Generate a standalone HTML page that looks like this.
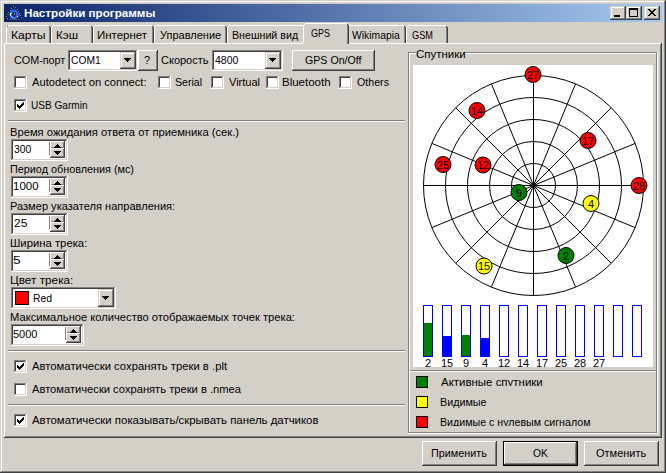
<!DOCTYPE html>
<html><head><meta charset="utf-8">
<style>
*{margin:0;padding:0;box-sizing:border-box}
html,body{width:666px;height:473px;overflow:hidden;background:#D4D0C8}
body{position:relative;font-family:"Liberation Sans",sans-serif;font-size:11px;color:#000}
.a{position:absolute}
.t{position:absolute;white-space:nowrap;line-height:13px;font-size:11px}
.r{position:absolute;background:#D4D0C8;border:1px solid;border-color:#fff #404040 #404040 #fff;box-shadow:inset -1px -1px #808080}
.s{position:absolute;background:#fff;border:1px solid;border-color:#808080 #fff #fff #808080;box-shadow:inset 1px 1px #404040,inset -1px -1px #D4D0C8}
.cb{position:absolute;width:13px;height:13px;background:#fff;border:1px solid;border-color:#808080 #fff #fff #808080;box-shadow:inset 1px 1px #404040,inset -1px -1px #D4D0C8}
.sep{position:absolute;height:2px;border-top:1px solid #808080;border-bottom:1px solid #fff}
</style></head><body>

<svg class="a" style="left:0px;top:0px" width="666" height="473" shape-rendering="crispEdges"><rect x="0" y="0" width="666" height="473" fill="#D4D0C8"/><rect x="0" y="0" width="665" height="1" fill="#D4D0C8"/><rect x="0" y="0" width="1" height="472" fill="#D4D0C8"/><rect x="0" y="472" width="666" height="1" fill="#404040"/><rect x="665" y="0" width="1" height="473" fill="#404040"/><rect x="1" y="1" width="663" height="1" fill="#fff"/><rect x="1" y="1" width="1" height="470" fill="#fff"/><rect x="1" y="471" width="664" height="1" fill="#808080"/><rect x="664" y="1" width="1" height="471" fill="#808080"/></svg>
<div class="a" style="left:4px;top:4px;width:658px;height:18px;background:linear-gradient(to right,#0A246A,#A6CAF0)"></div>
<svg class="a" style="left:0;top:0" width="30" height="22" shape-rendering="crispEdges"><rect x="11" y="9" width="1" height="1" fill="#1438b0"/><rect x="12" y="9" width="1" height="1" fill="#1438b0"/><rect x="13" y="9" width="1" height="1" fill="#1438b0"/><rect x="14" y="9" width="1" height="1" fill="#1438b0"/><rect x="15" y="9" width="1" height="1" fill="#1438b0"/><rect x="16" y="9" width="1" height="1" fill="#1438b0"/><rect x="10" y="10" width="1" height="1" fill="#1438b0"/><rect x="11" y="10" width="1" height="1" fill="#1438b0"/><rect x="12" y="10" width="1" height="1" fill="#2a6ae8"/><rect x="13" y="10" width="1" height="1" fill="#2a6ae8"/><rect x="14" y="10" width="1" height="1" fill="#2a6ae8"/><rect x="15" y="10" width="1" height="1" fill="#2a6ae8"/><rect x="16" y="10" width="1" height="1" fill="#1438b0"/><rect x="17" y="10" width="1" height="1" fill="#1438b0"/><rect x="9" y="11" width="1" height="1" fill="#1438b0"/><rect x="10" y="11" width="1" height="1" fill="#1438b0"/><rect x="11" y="11" width="1" height="1" fill="#2a6ae8"/><rect x="12" y="11" width="1" height="1" fill="#2a6ae8"/><rect x="13" y="11" width="1" height="1" fill="#2a6ae8"/><rect x="14" y="11" width="1" height="1" fill="#2a6ae8"/><rect x="15" y="11" width="1" height="1" fill="#2a6ae8"/><rect x="16" y="11" width="1" height="1" fill="#2a6ae8"/><rect x="17" y="11" width="1" height="1" fill="#1438b0"/><rect x="18" y="11" width="1" height="1" fill="#1438b0"/><rect x="9" y="12" width="1" height="1" fill="#1438b0"/><rect x="10" y="12" width="1" height="1" fill="#2a6ae8"/><rect x="11" y="12" width="1" height="1" fill="#2a6ae8"/><rect x="12" y="12" width="1" height="1" fill="#2a6ae8"/><rect x="13" y="12" width="1" height="1" fill="#10287a"/><rect x="14" y="12" width="1" height="1" fill="#10287a"/><rect x="15" y="12" width="1" height="1" fill="#2a6ae8"/><rect x="16" y="12" width="1" height="1" fill="#2a6ae8"/><rect x="17" y="12" width="1" height="1" fill="#2a6ae8"/><rect x="18" y="12" width="1" height="1" fill="#1438b0"/><rect x="8" y="13" width="1" height="1" fill="#1438b0"/><rect x="9" y="13" width="1" height="1" fill="#1438b0"/><rect x="10" y="13" width="1" height="1" fill="#2a6ae8"/><rect x="11" y="13" width="1" height="1" fill="#2a6ae8"/><rect x="12" y="13" width="1" height="1" fill="#10287a"/><rect x="13" y="13" width="1" height="1" fill="#10287a"/><rect x="14" y="13" width="1" height="1" fill="#10287a"/><rect x="15" y="13" width="1" height="1" fill="#10287a"/><rect x="16" y="13" width="1" height="1" fill="#2a6ae8"/><rect x="17" y="13" width="1" height="1" fill="#2a6ae8"/><rect x="18" y="13" width="1" height="1" fill="#1438b0"/><rect x="19" y="13" width="1" height="1" fill="#1438b0"/><rect x="8" y="14" width="1" height="1" fill="#1438b0"/><rect x="9" y="14" width="1" height="1" fill="#2a6ae8"/><rect x="10" y="14" width="1" height="1" fill="#2a6ae8"/><rect x="11" y="14" width="1" height="1" fill="#2a6ae8"/><rect x="12" y="14" width="1" height="1" fill="#10287a"/><rect x="13" y="14" width="1" height="1" fill="#10287a"/><rect x="14" y="14" width="1" height="1" fill="#10287a"/><rect x="15" y="14" width="1" height="1" fill="#10287a"/><rect x="16" y="14" width="1" height="1" fill="#2a6ae8"/><rect x="17" y="14" width="1" height="1" fill="#2a6ae8"/><rect x="18" y="14" width="1" height="1" fill="#2a6ae8"/><rect x="19" y="14" width="1" height="1" fill="#1438b0"/><rect x="8" y="15" width="1" height="1" fill="#1438b0"/><rect x="9" y="15" width="1" height="1" fill="#1438b0"/><rect x="10" y="15" width="1" height="1" fill="#2a6ae8"/><rect x="11" y="15" width="1" height="1" fill="#2a6ae8"/><rect x="12" y="15" width="1" height="1" fill="#10287a"/><rect x="13" y="15" width="1" height="1" fill="#10287a"/><rect x="14" y="15" width="1" height="1" fill="#10287a"/><rect x="15" y="15" width="1" height="1" fill="#10287a"/><rect x="16" y="15" width="1" height="1" fill="#2a6ae8"/><rect x="17" y="15" width="1" height="1" fill="#2a6ae8"/><rect x="18" y="15" width="1" height="1" fill="#1438b0"/><rect x="19" y="15" width="1" height="1" fill="#1438b0"/><rect x="9" y="16" width="1" height="1" fill="#1438b0"/><rect x="10" y="16" width="1" height="1" fill="#2a6ae8"/><rect x="11" y="16" width="1" height="1" fill="#2a6ae8"/><rect x="12" y="16" width="1" height="1" fill="#2a6ae8"/><rect x="13" y="16" width="1" height="1" fill="#10287a"/><rect x="14" y="16" width="1" height="1" fill="#10287a"/><rect x="15" y="16" width="1" height="1" fill="#2a6ae8"/><rect x="16" y="16" width="1" height="1" fill="#2a6ae8"/><rect x="17" y="16" width="1" height="1" fill="#2a6ae8"/><rect x="18" y="16" width="1" height="1" fill="#1438b0"/><rect x="9" y="17" width="1" height="1" fill="#1438b0"/><rect x="10" y="17" width="1" height="1" fill="#1438b0"/><rect x="11" y="17" width="1" height="1" fill="#2a6ae8"/><rect x="12" y="17" width="1" height="1" fill="#2a6ae8"/><rect x="13" y="17" width="1" height="1" fill="#2a6ae8"/><rect x="14" y="17" width="1" height="1" fill="#2a6ae8"/><rect x="15" y="17" width="1" height="1" fill="#2a6ae8"/><rect x="16" y="17" width="1" height="1" fill="#2a6ae8"/><rect x="17" y="17" width="1" height="1" fill="#1438b0"/><rect x="18" y="17" width="1" height="1" fill="#1438b0"/><rect x="10" y="18" width="1" height="1" fill="#1438b0"/><rect x="11" y="18" width="1" height="1" fill="#1438b0"/><rect x="12" y="18" width="1" height="1" fill="#2a6ae8"/><rect x="13" y="18" width="1" height="1" fill="#2a6ae8"/><rect x="14" y="18" width="1" height="1" fill="#2a6ae8"/><rect x="15" y="18" width="1" height="1" fill="#2a6ae8"/><rect x="16" y="18" width="1" height="1" fill="#1438b0"/><rect x="17" y="18" width="1" height="1" fill="#1438b0"/><rect x="11" y="19" width="1" height="1" fill="#1438b0"/><rect x="12" y="19" width="1" height="1" fill="#1438b0"/><rect x="13" y="19" width="1" height="1" fill="#1438b0"/><rect x="14" y="19" width="1" height="1" fill="#1438b0"/><rect x="15" y="19" width="1" height="1" fill="#1438b0"/><rect x="16" y="19" width="1" height="1" fill="#1438b0"/><rect x="10" y="13" width="1" height="1" fill="#d8ecff"/><rect x="10" y="14" width="1" height="1" fill="#ffffff"/><rect x="11" y="13" width="1" height="1" fill="#a0d0ff"/><rect x="10" y="15" width="1" height="1" fill="#c0e0ff"/><rect x="11" y="16" width="1" height="1" fill="#a0c8ff"/><rect x="17" y="16" width="1" height="1" fill="#f0f8ff"/><rect x="14" y="13" width="1" height="1" fill="#c8a850"/><rect x="14" y="14" width="1" height="1" fill="#a08030"/><rect x="13" y="12" width="1" height="1" fill="#203060"/><rect x="15" y="12" width="1" height="1" fill="#203060"/><rect x="14" y="16" width="1" height="1" fill="#0a2a90"/><rect x="13" y="15" width="1" height="1" fill="#1a3aa0"/><rect x="15" y="15" width="1" height="1" fill="#1a3aa0"/><rect x="12" y="17" width="1" height="1" fill="#c8d8ff"/><rect x="13" y="6" width="1" height="1" fill="#8a8878"/><rect x="12" y="7" width="1" height="1" fill="#141414"/><rect x="11" y="8" width="1" height="1" fill="#8a8878"/><rect x="10" y="9" width="1" height="1" fill="#141414"/><rect x="10" y="10" width="1" height="1" fill="#8a8878"/><rect x="9" y="11" width="1" height="1" fill="#141414"/><rect x="8" y="12" width="1" height="1" fill="#8a8878"/><rect x="8" y="13" width="1" height="1" fill="#141414"/><rect x="7" y="14" width="1" height="1" fill="#8a8878"/><rect x="7" y="15" width="1" height="1" fill="#141414"/><rect x="6" y="16" width="1" height="1" fill="#8a8878"/><rect x="6" y="17" width="1" height="1" fill="#141414"/><rect x="7" y="18" width="1" height="1" fill="#8a8878"/><rect x="14" y="6" width="1" height="1" fill="#141414"/><rect x="15" y="7" width="1" height="1" fill="#8a8878"/><rect x="16" y="8" width="1" height="1" fill="#141414"/><rect x="17" y="9" width="1" height="1" fill="#8a8878"/><rect x="17" y="10" width="1" height="1" fill="#141414"/><rect x="18" y="11" width="1" height="1" fill="#8a8878"/><rect x="19" y="12" width="1" height="1" fill="#141414"/><rect x="19" y="13" width="1" height="1" fill="#8a8878"/><rect x="20" y="14" width="1" height="1" fill="#141414"/><rect x="20" y="15" width="1" height="1" fill="#8a8878"/><rect x="21" y="16" width="1" height="1" fill="#141414"/><rect x="21" y="17" width="1" height="1" fill="#8a8878"/><rect x="20" y="18" width="1" height="1" fill="#141414"/><rect x="9" y="19" width="1" height="1" fill="#404040"/><rect x="10" y="19" width="1" height="1" fill="#606060"/><rect x="11" y="19" width="1" height="1" fill="#404040"/><rect x="12" y="19" width="1" height="1" fill="#606060"/><rect x="13" y="19" width="1" height="1" fill="#404040"/><rect x="14" y="19" width="1" height="1" fill="#606060"/><rect x="15" y="19" width="1" height="1" fill="#404040"/><rect x="16" y="19" width="1" height="1" fill="#606060"/><rect x="17" y="19" width="1" height="1" fill="#404040"/><rect x="18" y="19" width="1" height="1" fill="#606060"/><rect x="19" y="19" width="1" height="1" fill="#404040"/></svg>
<div class="t" style="left:23.94px;top:7px;transform:scaleX(1.0574);transform-origin:0 0;font-weight:bold;color:#fff">Настройки программы</div>
<svg class="a" style="left:610px;top:6px" width="16" height="14" shape-rendering="crispEdges"><rect x="0" y="0" width="16" height="14" fill="#D4D0C8"/><rect x="0" y="0" width="15" height="1" fill="#D4D0C8"/><rect x="0" y="0" width="1" height="13" fill="#D4D0C8"/><rect x="0" y="13" width="16" height="1" fill="#404040"/><rect x="15" y="0" width="1" height="14" fill="#404040"/><rect x="1" y="1" width="13" height="1" fill="#fff"/><rect x="1" y="1" width="1" height="11" fill="#fff"/><rect x="1" y="12" width="14" height="1" fill="#808080"/><rect x="14" y="1" width="1" height="12" fill="#808080"/></svg>
<svg class="a" style="left:626px;top:6px" width="16" height="14" shape-rendering="crispEdges"><rect x="0" y="0" width="16" height="14" fill="#D4D0C8"/><rect x="0" y="0" width="15" height="1" fill="#D4D0C8"/><rect x="0" y="0" width="1" height="13" fill="#D4D0C8"/><rect x="0" y="13" width="16" height="1" fill="#404040"/><rect x="15" y="0" width="1" height="14" fill="#404040"/><rect x="1" y="1" width="13" height="1" fill="#fff"/><rect x="1" y="1" width="1" height="11" fill="#fff"/><rect x="1" y="12" width="14" height="1" fill="#808080"/><rect x="14" y="1" width="1" height="12" fill="#808080"/></svg>
<svg class="a" style="left:644px;top:6px" width="16" height="14" shape-rendering="crispEdges"><rect x="0" y="0" width="16" height="14" fill="#D4D0C8"/><rect x="0" y="0" width="15" height="1" fill="#D4D0C8"/><rect x="0" y="0" width="1" height="13" fill="#D4D0C8"/><rect x="0" y="13" width="16" height="1" fill="#404040"/><rect x="15" y="0" width="1" height="14" fill="#404040"/><rect x="1" y="1" width="13" height="1" fill="#fff"/><rect x="1" y="1" width="1" height="11" fill="#fff"/><rect x="1" y="12" width="14" height="1" fill="#808080"/><rect x="14" y="1" width="1" height="12" fill="#808080"/></svg>
<div class="a" style="left:614px;top:15px;width:6px;height:2px;background:#000"></div>
<div class="a" style="left:629px;top:8px;width:9px;height:9px;border:1px solid #000;border-top-width:2px"></div>
<svg class="a" style="left:648px;top:9px" width="8" height="7" shape-rendering="crispEdges"><path fill="#000" d="M0 0h2v1h-2zM6 0h2v1h-2zM1 1h2v1h-2zM5 1h2v1h-2zM2 2h4v1h-4zM3 3h2v1h-2zM2 4h4v1h-4zM1 5h2v1h-2zM5 5h2v1h-2zM0 6h2v1h-2zM6 6h2v1h-2z"/></svg>
<svg class="a" style="left:4px;top:43px" width="658" height="395" shape-rendering="crispEdges"><rect x="0" y="0" width="657" height="1" fill="#fff"/><rect x="0" y="0" width="1" height="394" fill="#fff"/><rect x="0" y="394" width="658" height="1" fill="#404040"/><rect x="657" y="0" width="1" height="395" fill="#404040"/><rect x="1" y="393" width="656" height="1" fill="#808080"/><rect x="656" y="1" width="1" height="393" fill="#808080"/></svg>
<svg class="a" style="left:0;top:0" width="666" height="50" shape-rendering="crispEdges">
<rect x="6" y="27" width="1" height="16" fill="#fff"/>
<rect x="7" y="26" width="1" height="1" fill="#808080"/>
<rect x="8" y="25" width="41" height="1" fill="#fff"/>
<rect x="49" y="26" width="1" height="1" fill="#404040"/>
<rect x="49" y="27" width="1" height="16" fill="#808080"/>
<rect x="50" y="27" width="1" height="16" fill="#404040"/>
<rect x="51" y="27" width="1" height="16" fill="#fff"/>
<rect x="52" y="26" width="1" height="1" fill="#fff"/>
<rect x="53" y="25" width="38" height="1" fill="#fff"/>
<rect x="91" y="26" width="1" height="1" fill="#404040"/>
<rect x="91" y="27" width="1" height="16" fill="#808080"/>
<rect x="92" y="27" width="1" height="16" fill="#404040"/>
<rect x="93" y="27" width="1" height="16" fill="#fff"/>
<rect x="94" y="26" width="1" height="1" fill="#fff"/>
<rect x="95" y="25" width="57" height="1" fill="#fff"/>
<rect x="152" y="26" width="1" height="1" fill="#404040"/>
<rect x="152" y="27" width="1" height="16" fill="#808080"/>
<rect x="153" y="27" width="1" height="16" fill="#404040"/>
<rect x="154" y="27" width="1" height="16" fill="#fff"/>
<rect x="155" y="26" width="1" height="1" fill="#fff"/>
<rect x="156" y="25" width="69" height="1" fill="#fff"/>
<rect x="225" y="26" width="1" height="1" fill="#404040"/>
<rect x="225" y="27" width="1" height="16" fill="#808080"/>
<rect x="226" y="27" width="1" height="16" fill="#404040"/>
<rect x="227" y="27" width="1" height="16" fill="#fff"/>
<rect x="228" y="26" width="1" height="1" fill="#fff"/>
<rect x="229" y="25" width="74" height="1" fill="#fff"/>
<rect x="303" y="26" width="1" height="1" fill="#404040"/>
<rect x="303" y="27" width="1" height="16" fill="#808080"/>
<rect x="304" y="27" width="1" height="16" fill="#404040"/>
<rect x="347" y="27" width="1" height="16" fill="#fff"/>
<rect x="348" y="26" width="1" height="1" fill="#fff"/>
<rect x="349" y="25" width="55" height="1" fill="#fff"/>
<rect x="404" y="26" width="1" height="1" fill="#404040"/>
<rect x="404" y="27" width="1" height="16" fill="#808080"/>
<rect x="405" y="27" width="1" height="16" fill="#404040"/>
<rect x="406" y="27" width="1" height="16" fill="#fff"/>
<rect x="407" y="26" width="1" height="1" fill="#fff"/>
<rect x="408" y="25" width="38" height="1" fill="#fff"/>
<rect x="446" y="26" width="1" height="1" fill="#404040"/>
<rect x="446" y="27" width="1" height="16" fill="#808080"/>
<rect x="447" y="27" width="1" height="16" fill="#404040"/>
<rect x="303" y="24" width="46" height="20" fill="#D4D0C8"/>
<rect x="303" y="25" width="1" height="18" fill="#fff"/>
<rect x="304" y="24" width="1" height="1" fill="#fff"/>
<rect x="305" y="23" width="42" height="1" fill="#fff"/>
<rect x="347" y="24" width="1" height="1" fill="#404040"/>
<rect x="347" y="25" width="1" height="19" fill="#808080"/>
<rect x="348" y="25" width="1" height="19" fill="#404040"/>
</svg>
<div class="t" style="left:10.90px;top:29px;transform:scaleX(1.1034);transform-origin:0 0;">Карты</div>
<div class="t" style="left:55.94px;top:29px;transform:scaleX(1.0556);transform-origin:0 0;">Кэш</div>
<div class="t" style="left:96.96px;top:29px;transform:scaleX(1.0435);transform-origin:0 0;">Интернет</div>
<div class="t" style="left:160.00px;top:29px;transform:scaleX(1.0000);transform-origin:0 0;">Управление</div>
<div class="t" style="left:232.03px;top:29px;transform:scaleX(0.9697);transform-origin:0 0;">Внешний вид</div>
<div class="t" style="left:311.00px;top:27px;transform:scaleX(0.8182);transform-origin:0 0;">GPS</div>
<div class="t" style="left:352.00px;top:29px;transform:scaleX(0.9400);transform-origin:0 0;">Wikimapia</div>
<div class="t" style="left:412.00px;top:29px;transform:scaleX(0.8333);transform-origin:0 0;">GSM</div>
<div class="t" style="left:14.00px;top:54px;transform:scaleX(0.9804);transform-origin:0 0;">COM-порт</div>
<svg class="a" style="left:68px;top:50px" width="70" height="21" shape-rendering="crispEdges"><rect x="0" y="0" width="70" height="21" fill="#fff"/><rect x="0" y="0" width="69" height="1" fill="#808080"/><rect x="0" y="0" width="1" height="20" fill="#808080"/><rect x="0" y="20" width="70" height="1" fill="#fff"/><rect x="69" y="0" width="1" height="21" fill="#fff"/><rect x="1" y="1" width="67" height="1" fill="#404040"/><rect x="1" y="1" width="1" height="18" fill="#404040"/><rect x="1" y="19" width="68" height="1" fill="#D4D0C8"/><rect x="68" y="1" width="1" height="19" fill="#D4D0C8"/></svg>
<svg class="a" style="left:120px;top:52px" width="16" height="17" shape-rendering="crispEdges"><rect x="0" y="0" width="16" height="17" fill="#D4D0C8"/><rect x="0" y="0" width="15" height="1" fill="#D4D0C8"/><rect x="0" y="0" width="1" height="16" fill="#D4D0C8"/><rect x="0" y="16" width="16" height="1" fill="#404040"/><rect x="15" y="0" width="1" height="17" fill="#404040"/><rect x="1" y="1" width="13" height="1" fill="#fff"/><rect x="1" y="1" width="1" height="14" fill="#fff"/><rect x="1" y="15" width="14" height="1" fill="#808080"/><rect x="14" y="1" width="1" height="15" fill="#808080"/></svg>
<svg class="a" style="left:124px;top:58px" width="7" height="4" shape-rendering="crispEdges"><path fill="#000" d="M0 0h7v1h-7zM1 1h5v1h-5zM2 2h3v1h-3zM3 3h1v1h-1z"/></svg>
<div class="t" style="left:71.00px;top:54px;transform:scaleX(0.9333);transform-origin:0 0;">COM1</div>
<svg class="a" style="left:138px;top:50px" width="20" height="21" shape-rendering="crispEdges"><rect x="0" y="0" width="20" height="21" fill="#D4D0C8"/><rect x="0" y="0" width="19" height="1" fill="#fff"/><rect x="0" y="0" width="1" height="20" fill="#fff"/><rect x="0" y="20" width="20" height="1" fill="#404040"/><rect x="19" y="0" width="1" height="21" fill="#404040"/><rect x="1" y="1" width="17" height="1" fill="#D4D0C8"/><rect x="1" y="1" width="1" height="18" fill="#D4D0C8"/><rect x="1" y="19" width="18" height="1" fill="#808080"/><rect x="18" y="1" width="1" height="19" fill="#808080"/></svg>
<div class="t" style="left:144.00px;top:54px;transform:scaleX(1.0000);transform-origin:0 0;">?</div>
<div class="t" style="left:161.00px;top:54px;transform:scaleX(1.0000);transform-origin:0 0;">Скорость</div>
<svg class="a" style="left:212px;top:50px" width="71" height="21" shape-rendering="crispEdges"><rect x="0" y="0" width="71" height="21" fill="#fff"/><rect x="0" y="0" width="70" height="1" fill="#808080"/><rect x="0" y="0" width="1" height="20" fill="#808080"/><rect x="0" y="20" width="71" height="1" fill="#fff"/><rect x="70" y="0" width="1" height="21" fill="#fff"/><rect x="1" y="1" width="68" height="1" fill="#404040"/><rect x="1" y="1" width="1" height="18" fill="#404040"/><rect x="1" y="19" width="69" height="1" fill="#D4D0C8"/><rect x="69" y="1" width="1" height="19" fill="#D4D0C8"/></svg>
<svg class="a" style="left:265px;top:52px" width="16" height="17" shape-rendering="crispEdges"><rect x="0" y="0" width="16" height="17" fill="#D4D0C8"/><rect x="0" y="0" width="15" height="1" fill="#D4D0C8"/><rect x="0" y="0" width="1" height="16" fill="#D4D0C8"/><rect x="0" y="16" width="16" height="1" fill="#404040"/><rect x="15" y="0" width="1" height="17" fill="#404040"/><rect x="1" y="1" width="13" height="1" fill="#fff"/><rect x="1" y="1" width="1" height="14" fill="#fff"/><rect x="1" y="15" width="14" height="1" fill="#808080"/><rect x="14" y="1" width="1" height="15" fill="#808080"/></svg>
<svg class="a" style="left:269px;top:58px" width="7" height="4" shape-rendering="crispEdges"><path fill="#000" d="M0 0h7v1h-7zM1 1h5v1h-5zM2 2h3v1h-3zM3 3h1v1h-1z"/></svg>
<div class="t" style="left:215.00px;top:54px;transform:scaleX(0.9565);transform-origin:0 0;">4800</div>
<svg class="a" style="left:292px;top:50px" width="83" height="21" shape-rendering="crispEdges"><rect x="0" y="0" width="83" height="21" fill="#D4D0C8"/><rect x="0" y="0" width="82" height="1" fill="#fff"/><rect x="0" y="0" width="1" height="20" fill="#fff"/><rect x="0" y="20" width="83" height="1" fill="#404040"/><rect x="82" y="0" width="1" height="21" fill="#404040"/><rect x="1" y="1" width="80" height="1" fill="#D4D0C8"/><rect x="1" y="1" width="1" height="18" fill="#D4D0C8"/><rect x="1" y="19" width="81" height="1" fill="#808080"/><rect x="81" y="1" width="1" height="19" fill="#808080"/></svg>
<div class="t" style="left:305.00px;top:54px;transform:scaleX(0.9655);transform-origin:0 0;">GPS On/Off</div>
<svg class="a" style="left:14px;top:76px" width="13" height="13" shape-rendering="crispEdges"><rect x="0" y="0" width="13" height="13" fill="#fff"/><rect x="0" y="0" width="12" height="1" fill="#808080"/><rect x="0" y="0" width="1" height="12" fill="#808080"/><rect x="0" y="12" width="13" height="1" fill="#fff"/><rect x="12" y="0" width="1" height="13" fill="#fff"/><rect x="1" y="1" width="10" height="1" fill="#404040"/><rect x="1" y="1" width="1" height="10" fill="#404040"/><rect x="1" y="11" width="11" height="1" fill="#D4D0C8"/><rect x="11" y="1" width="1" height="11" fill="#D4D0C8"/></svg>
<div class="t" style="left:32.00px;top:76px;transform:scaleX(1.0180);transform-origin:0 0;">Autodetect on connect:</div>
<svg class="a" style="left:158px;top:76px" width="13" height="13" shape-rendering="crispEdges"><rect x="0" y="0" width="13" height="13" fill="#fff"/><rect x="0" y="0" width="12" height="1" fill="#808080"/><rect x="0" y="0" width="1" height="12" fill="#808080"/><rect x="0" y="12" width="13" height="1" fill="#fff"/><rect x="12" y="0" width="1" height="13" fill="#fff"/><rect x="1" y="1" width="10" height="1" fill="#404040"/><rect x="1" y="1" width="1" height="10" fill="#404040"/><rect x="1" y="11" width="11" height="1" fill="#D4D0C8"/><rect x="11" y="1" width="1" height="11" fill="#D4D0C8"/></svg>
<div class="t" style="left:175.04px;top:76px;transform:scaleX(0.9615);transform-origin:0 0;">Serial</div>
<svg class="a" style="left:211px;top:76px" width="13" height="13" shape-rendering="crispEdges"><rect x="0" y="0" width="13" height="13" fill="#fff"/><rect x="0" y="0" width="12" height="1" fill="#808080"/><rect x="0" y="0" width="1" height="12" fill="#808080"/><rect x="0" y="12" width="13" height="1" fill="#fff"/><rect x="12" y="0" width="1" height="13" fill="#fff"/><rect x="1" y="1" width="10" height="1" fill="#404040"/><rect x="1" y="1" width="1" height="10" fill="#404040"/><rect x="1" y="11" width="11" height="1" fill="#D4D0C8"/><rect x="11" y="1" width="1" height="11" fill="#D4D0C8"/></svg>
<div class="t" style="left:229.00px;top:76px;transform:scaleX(1.0000);transform-origin:0 0;">Virtual</div>
<svg class="a" style="left:266px;top:76px" width="13" height="13" shape-rendering="crispEdges"><rect x="0" y="0" width="13" height="13" fill="#fff"/><rect x="0" y="0" width="12" height="1" fill="#808080"/><rect x="0" y="0" width="1" height="12" fill="#808080"/><rect x="0" y="12" width="13" height="1" fill="#fff"/><rect x="12" y="0" width="1" height="13" fill="#fff"/><rect x="1" y="1" width="10" height="1" fill="#404040"/><rect x="1" y="1" width="1" height="10" fill="#404040"/><rect x="1" y="11" width="11" height="1" fill="#D4D0C8"/><rect x="11" y="1" width="1" height="11" fill="#D4D0C8"/></svg>
<div class="t" style="left:281.95px;top:76px;transform:scaleX(1.0455);transform-origin:0 0;">Bluetooth</div>
<svg class="a" style="left:339px;top:76px" width="13" height="13" shape-rendering="crispEdges"><rect x="0" y="0" width="13" height="13" fill="#fff"/><rect x="0" y="0" width="12" height="1" fill="#808080"/><rect x="0" y="0" width="1" height="12" fill="#808080"/><rect x="0" y="12" width="13" height="1" fill="#fff"/><rect x="12" y="0" width="1" height="13" fill="#fff"/><rect x="1" y="1" width="10" height="1" fill="#404040"/><rect x="1" y="1" width="1" height="10" fill="#404040"/><rect x="1" y="11" width="11" height="1" fill="#D4D0C8"/><rect x="11" y="1" width="1" height="11" fill="#D4D0C8"/></svg>
<div class="t" style="left:357.00px;top:76px;transform:scaleX(0.9688);transform-origin:0 0;">Others</div>
<svg class="a" style="left:14px;top:99px" width="13" height="13" shape-rendering="crispEdges"><rect x="0" y="0" width="13" height="13" fill="#fff"/><rect x="0" y="0" width="12" height="1" fill="#808080"/><rect x="0" y="0" width="1" height="12" fill="#808080"/><rect x="0" y="12" width="13" height="1" fill="#fff"/><rect x="12" y="0" width="1" height="13" fill="#fff"/><rect x="1" y="1" width="10" height="1" fill="#404040"/><rect x="1" y="1" width="1" height="10" fill="#404040"/><rect x="1" y="11" width="11" height="1" fill="#D4D0C8"/><rect x="11" y="1" width="1" height="11" fill="#D4D0C8"/></svg>
<svg class="a" style="left:17px;top:102px" width="7" height="7" shape-rendering="crispEdges"><path fill="#000" d="M0 2h1v1h-1zM0 3h1v1h-1zM0 4h1v1h-1zM1 3h1v1h-1zM1 4h1v1h-1zM1 5h1v1h-1zM2 4h1v1h-1zM2 5h1v1h-1zM2 6h1v1h-1zM3 3h1v1h-1zM3 4h1v1h-1zM3 5h1v1h-1zM4 2h1v1h-1zM4 3h1v1h-1zM4 4h1v1h-1zM5 1h1v1h-1zM5 2h1v1h-1zM5 3h1v1h-1zM6 0h1v1h-1zM6 1h1v1h-1zM6 2h1v1h-1z"/></svg>
<div class="t" style="left:31.08px;top:99px;transform:scaleX(0.9153);transform-origin:0 0;">USB Garmin</div>
<div class="sep" style="left:8px;top:120px;width:397px"></div>
<div class="t" style="left:9.98px;top:126px;transform:scaleX(1.0180);transform-origin:0 0;">Время ожидания ответа от приемника (сек.)</div>
<svg class="a" style="left:11px;top:139px" width="57" height="22" shape-rendering="crispEdges"><rect x="0" y="0" width="57" height="22" fill="#fff"/><rect x="0" y="0" width="56" height="1" fill="#808080"/><rect x="0" y="0" width="1" height="21" fill="#808080"/><rect x="0" y="21" width="57" height="1" fill="#fff"/><rect x="56" y="0" width="1" height="22" fill="#fff"/><rect x="1" y="1" width="54" height="1" fill="#404040"/><rect x="1" y="1" width="1" height="19" fill="#404040"/><rect x="1" y="20" width="55" height="1" fill="#D4D0C8"/><rect x="55" y="1" width="1" height="20" fill="#D4D0C8"/></svg>
<div class="a" style="left:49px;top:142px;width:1px;height:13px;background:#808080"></div>
<svg class="a" style="left:50px;top:141px" width="15" height="8" shape-rendering="crispEdges"><rect x="0" y="0" width="15" height="8" fill="#D4D0C8"/><rect x="0" y="0" width="14" height="1" fill="#fff"/><rect x="0" y="0" width="1" height="7" fill="#fff"/><rect x="0" y="7" width="15" height="1" fill="#404040"/><rect x="14" y="0" width="1" height="8" fill="#404040"/><rect x="1" y="1" width="12" height="1" fill="#D4D0C8"/><rect x="1" y="1" width="1" height="5" fill="#D4D0C8"/><rect x="1" y="6" width="13" height="1" fill="#808080"/><rect x="13" y="1" width="1" height="6" fill="#808080"/></svg>
<svg class="a" style="left:50px;top:148px" width="15" height="10" shape-rendering="crispEdges"><rect x="0" y="0" width="15" height="10" fill="#D4D0C8"/><rect x="0" y="0" width="14" height="1" fill="#fff"/><rect x="0" y="0" width="1" height="9" fill="#fff"/><rect x="0" y="9" width="15" height="1" fill="#404040"/><rect x="14" y="0" width="1" height="10" fill="#404040"/><rect x="1" y="1" width="12" height="1" fill="#D4D0C8"/><rect x="1" y="1" width="1" height="7" fill="#D4D0C8"/><rect x="1" y="8" width="13" height="1" fill="#808080"/><rect x="13" y="1" width="1" height="8" fill="#808080"/></svg>
<svg class="a" style="left:54px;top:144px" width="7" height="4" shape-rendering="crispEdges"><path fill="#000" d="M3 0h1v1h-1zM2 1h3v1h-3zM1 2h5v1h-5zM0 3h7v1h-7z"/></svg>
<svg class="a" style="left:54px;top:151px" width="7" height="4" shape-rendering="crispEdges"><path fill="#000" d="M0 0h7v1h-7zM1 1h5v1h-5zM2 2h3v1h-3zM3 3h1v1h-1z"/></svg>
<div class="t" style="left:10.02px;top:163px;transform:scaleX(0.9837);transform-origin:0 0;">Период обновления (мс)</div>
<svg class="a" style="left:11px;top:176px" width="57" height="22" shape-rendering="crispEdges"><rect x="0" y="0" width="57" height="22" fill="#fff"/><rect x="0" y="0" width="56" height="1" fill="#808080"/><rect x="0" y="0" width="1" height="21" fill="#808080"/><rect x="0" y="21" width="57" height="1" fill="#fff"/><rect x="56" y="0" width="1" height="22" fill="#fff"/><rect x="1" y="1" width="54" height="1" fill="#404040"/><rect x="1" y="1" width="1" height="19" fill="#404040"/><rect x="1" y="20" width="55" height="1" fill="#D4D0C8"/><rect x="55" y="1" width="1" height="20" fill="#D4D0C8"/></svg>
<div class="a" style="left:49px;top:179px;width:1px;height:13px;background:#808080"></div>
<svg class="a" style="left:50px;top:178px" width="15" height="8" shape-rendering="crispEdges"><rect x="0" y="0" width="15" height="8" fill="#D4D0C8"/><rect x="0" y="0" width="14" height="1" fill="#fff"/><rect x="0" y="0" width="1" height="7" fill="#fff"/><rect x="0" y="7" width="15" height="1" fill="#404040"/><rect x="14" y="0" width="1" height="8" fill="#404040"/><rect x="1" y="1" width="12" height="1" fill="#D4D0C8"/><rect x="1" y="1" width="1" height="5" fill="#D4D0C8"/><rect x="1" y="6" width="13" height="1" fill="#808080"/><rect x="13" y="1" width="1" height="6" fill="#808080"/></svg>
<svg class="a" style="left:50px;top:185px" width="15" height="10" shape-rendering="crispEdges"><rect x="0" y="0" width="15" height="10" fill="#D4D0C8"/><rect x="0" y="0" width="14" height="1" fill="#fff"/><rect x="0" y="0" width="1" height="9" fill="#fff"/><rect x="0" y="9" width="15" height="1" fill="#404040"/><rect x="14" y="0" width="1" height="10" fill="#404040"/><rect x="1" y="1" width="12" height="1" fill="#D4D0C8"/><rect x="1" y="1" width="1" height="7" fill="#D4D0C8"/><rect x="1" y="8" width="13" height="1" fill="#808080"/><rect x="13" y="1" width="1" height="8" fill="#808080"/></svg>
<svg class="a" style="left:54px;top:181px" width="7" height="4" shape-rendering="crispEdges"><path fill="#000" d="M3 0h1v1h-1zM2 1h3v1h-3zM1 2h5v1h-5zM0 3h7v1h-7z"/></svg>
<svg class="a" style="left:54px;top:188px" width="7" height="4" shape-rendering="crispEdges"><path fill="#000" d="M0 0h7v1h-7zM1 1h5v1h-5zM2 2h3v1h-3zM3 3h1v1h-1z"/></svg>
<div class="t" style="left:9.99px;top:200px;transform:scaleX(1.0062);transform-origin:0 0;">Размер указателя направления:</div>
<svg class="a" style="left:11px;top:213px" width="57" height="22" shape-rendering="crispEdges"><rect x="0" y="0" width="57" height="22" fill="#fff"/><rect x="0" y="0" width="56" height="1" fill="#808080"/><rect x="0" y="0" width="1" height="21" fill="#808080"/><rect x="0" y="21" width="57" height="1" fill="#fff"/><rect x="56" y="0" width="1" height="22" fill="#fff"/><rect x="1" y="1" width="54" height="1" fill="#404040"/><rect x="1" y="1" width="1" height="19" fill="#404040"/><rect x="1" y="20" width="55" height="1" fill="#D4D0C8"/><rect x="55" y="1" width="1" height="20" fill="#D4D0C8"/></svg>
<div class="a" style="left:49px;top:216px;width:1px;height:13px;background:#808080"></div>
<svg class="a" style="left:50px;top:215px" width="15" height="8" shape-rendering="crispEdges"><rect x="0" y="0" width="15" height="8" fill="#D4D0C8"/><rect x="0" y="0" width="14" height="1" fill="#fff"/><rect x="0" y="0" width="1" height="7" fill="#fff"/><rect x="0" y="7" width="15" height="1" fill="#404040"/><rect x="14" y="0" width="1" height="8" fill="#404040"/><rect x="1" y="1" width="12" height="1" fill="#D4D0C8"/><rect x="1" y="1" width="1" height="5" fill="#D4D0C8"/><rect x="1" y="6" width="13" height="1" fill="#808080"/><rect x="13" y="1" width="1" height="6" fill="#808080"/></svg>
<svg class="a" style="left:50px;top:222px" width="15" height="10" shape-rendering="crispEdges"><rect x="0" y="0" width="15" height="10" fill="#D4D0C8"/><rect x="0" y="0" width="14" height="1" fill="#fff"/><rect x="0" y="0" width="1" height="9" fill="#fff"/><rect x="0" y="9" width="15" height="1" fill="#404040"/><rect x="14" y="0" width="1" height="10" fill="#404040"/><rect x="1" y="1" width="12" height="1" fill="#D4D0C8"/><rect x="1" y="1" width="1" height="7" fill="#D4D0C8"/><rect x="1" y="8" width="13" height="1" fill="#808080"/><rect x="13" y="1" width="1" height="8" fill="#808080"/></svg>
<svg class="a" style="left:54px;top:218px" width="7" height="4" shape-rendering="crispEdges"><path fill="#000" d="M3 0h1v1h-1zM2 1h3v1h-3zM1 2h5v1h-5zM0 3h7v1h-7z"/></svg>
<svg class="a" style="left:54px;top:225px" width="7" height="4" shape-rendering="crispEdges"><path fill="#000" d="M0 0h7v1h-7zM1 1h5v1h-5zM2 2h3v1h-3zM3 3h1v1h-1z"/></svg>
<div class="t" style="left:9.97px;top:237px;transform:scaleX(1.0274);transform-origin:0 0;">Ширина трека:</div>
<svg class="a" style="left:11px;top:250px" width="57" height="22" shape-rendering="crispEdges"><rect x="0" y="0" width="57" height="22" fill="#fff"/><rect x="0" y="0" width="56" height="1" fill="#808080"/><rect x="0" y="0" width="1" height="21" fill="#808080"/><rect x="0" y="21" width="57" height="1" fill="#fff"/><rect x="56" y="0" width="1" height="22" fill="#fff"/><rect x="1" y="1" width="54" height="1" fill="#404040"/><rect x="1" y="1" width="1" height="19" fill="#404040"/><rect x="1" y="20" width="55" height="1" fill="#D4D0C8"/><rect x="55" y="1" width="1" height="20" fill="#D4D0C8"/></svg>
<div class="a" style="left:49px;top:253px;width:1px;height:13px;background:#808080"></div>
<svg class="a" style="left:50px;top:252px" width="15" height="8" shape-rendering="crispEdges"><rect x="0" y="0" width="15" height="8" fill="#D4D0C8"/><rect x="0" y="0" width="14" height="1" fill="#fff"/><rect x="0" y="0" width="1" height="7" fill="#fff"/><rect x="0" y="7" width="15" height="1" fill="#404040"/><rect x="14" y="0" width="1" height="8" fill="#404040"/><rect x="1" y="1" width="12" height="1" fill="#D4D0C8"/><rect x="1" y="1" width="1" height="5" fill="#D4D0C8"/><rect x="1" y="6" width="13" height="1" fill="#808080"/><rect x="13" y="1" width="1" height="6" fill="#808080"/></svg>
<svg class="a" style="left:50px;top:259px" width="15" height="10" shape-rendering="crispEdges"><rect x="0" y="0" width="15" height="10" fill="#D4D0C8"/><rect x="0" y="0" width="14" height="1" fill="#fff"/><rect x="0" y="0" width="1" height="9" fill="#fff"/><rect x="0" y="9" width="15" height="1" fill="#404040"/><rect x="14" y="0" width="1" height="10" fill="#404040"/><rect x="1" y="1" width="12" height="1" fill="#D4D0C8"/><rect x="1" y="1" width="1" height="7" fill="#D4D0C8"/><rect x="1" y="8" width="13" height="1" fill="#808080"/><rect x="13" y="1" width="1" height="8" fill="#808080"/></svg>
<svg class="a" style="left:54px;top:255px" width="7" height="4" shape-rendering="crispEdges"><path fill="#000" d="M3 0h1v1h-1zM2 1h3v1h-3zM1 2h5v1h-5zM0 3h7v1h-7z"/></svg>
<svg class="a" style="left:54px;top:262px" width="7" height="4" shape-rendering="crispEdges"><path fill="#000" d="M0 0h7v1h-7zM1 1h5v1h-5zM2 2h3v1h-3zM3 3h1v1h-1z"/></svg>
<div class="t" style="left:9.93px;top:274px;transform:scaleX(1.0702);transform-origin:0 0;">Цвет трека:</div>
<div class="t" style="left:9.99px;top:311px;transform:scaleX(1.0144);transform-origin:0 0;">Максимальное количество отображаемых точек трека:</div>
<svg class="a" style="left:11px;top:324px" width="73" height="22" shape-rendering="crispEdges"><rect x="0" y="0" width="73" height="22" fill="#fff"/><rect x="0" y="0" width="72" height="1" fill="#808080"/><rect x="0" y="0" width="1" height="21" fill="#808080"/><rect x="0" y="21" width="73" height="1" fill="#fff"/><rect x="72" y="0" width="1" height="22" fill="#fff"/><rect x="1" y="1" width="70" height="1" fill="#404040"/><rect x="1" y="1" width="1" height="19" fill="#404040"/><rect x="1" y="20" width="71" height="1" fill="#D4D0C8"/><rect x="71" y="1" width="1" height="20" fill="#D4D0C8"/></svg>
<div class="a" style="left:65px;top:327px;width:1px;height:13px;background:#808080"></div>
<svg class="a" style="left:66px;top:326px" width="15" height="8" shape-rendering="crispEdges"><rect x="0" y="0" width="15" height="8" fill="#D4D0C8"/><rect x="0" y="0" width="14" height="1" fill="#fff"/><rect x="0" y="0" width="1" height="7" fill="#fff"/><rect x="0" y="7" width="15" height="1" fill="#404040"/><rect x="14" y="0" width="1" height="8" fill="#404040"/><rect x="1" y="1" width="12" height="1" fill="#D4D0C8"/><rect x="1" y="1" width="1" height="5" fill="#D4D0C8"/><rect x="1" y="6" width="13" height="1" fill="#808080"/><rect x="13" y="1" width="1" height="6" fill="#808080"/></svg>
<svg class="a" style="left:66px;top:333px" width="15" height="10" shape-rendering="crispEdges"><rect x="0" y="0" width="15" height="10" fill="#D4D0C8"/><rect x="0" y="0" width="14" height="1" fill="#fff"/><rect x="0" y="0" width="1" height="9" fill="#fff"/><rect x="0" y="9" width="15" height="1" fill="#404040"/><rect x="14" y="0" width="1" height="10" fill="#404040"/><rect x="1" y="1" width="12" height="1" fill="#D4D0C8"/><rect x="1" y="1" width="1" height="7" fill="#D4D0C8"/><rect x="1" y="8" width="13" height="1" fill="#808080"/><rect x="13" y="1" width="1" height="8" fill="#808080"/></svg>
<svg class="a" style="left:70px;top:329px" width="7" height="4" shape-rendering="crispEdges"><path fill="#000" d="M3 0h1v1h-1zM2 1h3v1h-3zM1 2h5v1h-5zM0 3h7v1h-7z"/></svg>
<svg class="a" style="left:70px;top:336px" width="7" height="4" shape-rendering="crispEdges"><path fill="#000" d="M0 0h7v1h-7zM1 1h5v1h-5zM2 2h3v1h-3zM3 3h1v1h-1z"/></svg>
<div class="t" style="left:14.00px;top:143px;transform:scaleX(0.9412);transform-origin:0 0;">300</div>
<div class="t" style="left:12.95px;top:180px;transform:scaleX(1.0455);transform-origin:0 0;">1000</div>
<div class="t" style="left:14.00px;top:217px;transform:scaleX(1.0909);transform-origin:0 0;">25</div>
<div class="t" style="left:12.75px;top:254px;transform:scaleX(1.2500);transform-origin:0 0;">5</div>
<div class="t" style="left:13.00px;top:328px;transform:scaleX(1.0000);transform-origin:0 0;">5000</div>
<svg class="a" style="left:11px;top:287px" width="105" height="22" shape-rendering="crispEdges"><rect x="0" y="0" width="105" height="22" fill="#fff"/><rect x="0" y="0" width="104" height="1" fill="#808080"/><rect x="0" y="0" width="1" height="21" fill="#808080"/><rect x="0" y="21" width="105" height="1" fill="#fff"/><rect x="104" y="0" width="1" height="22" fill="#fff"/><rect x="1" y="1" width="102" height="1" fill="#404040"/><rect x="1" y="1" width="1" height="19" fill="#404040"/><rect x="1" y="20" width="103" height="1" fill="#D4D0C8"/><rect x="103" y="1" width="1" height="20" fill="#D4D0C8"/></svg>
<svg class="a" style="left:98px;top:289px" width="16" height="18" shape-rendering="crispEdges"><rect x="0" y="0" width="16" height="18" fill="#D4D0C8"/><rect x="0" y="0" width="15" height="1" fill="#D4D0C8"/><rect x="0" y="0" width="1" height="17" fill="#D4D0C8"/><rect x="0" y="17" width="16" height="1" fill="#404040"/><rect x="15" y="0" width="1" height="18" fill="#404040"/><rect x="1" y="1" width="13" height="1" fill="#fff"/><rect x="1" y="1" width="1" height="15" fill="#fff"/><rect x="1" y="16" width="14" height="1" fill="#808080"/><rect x="14" y="1" width="1" height="16" fill="#808080"/></svg>
<svg class="a" style="left:102px;top:296px" width="7" height="4" shape-rendering="crispEdges"><path fill="#000" d="M0 0h7v1h-7zM1 1h5v1h-5zM2 2h3v1h-3zM3 3h1v1h-1z"/></svg>
<div class="a" style="left:15px;top:291px;width:14px;height:14px;background:#f00;border:1px solid #000"></div>
<div class="t" style="left:33.06px;top:292px;transform:scaleX(0.9444);transform-origin:0 0;">Red</div>
<div class="sep" style="left:8px;top:350px;width:397px"></div>
<svg class="a" style="left:14px;top:360px" width="13" height="13" shape-rendering="crispEdges"><rect x="0" y="0" width="13" height="13" fill="#fff"/><rect x="0" y="0" width="12" height="1" fill="#808080"/><rect x="0" y="0" width="1" height="12" fill="#808080"/><rect x="0" y="12" width="13" height="1" fill="#fff"/><rect x="12" y="0" width="1" height="13" fill="#fff"/><rect x="1" y="1" width="10" height="1" fill="#404040"/><rect x="1" y="1" width="1" height="10" fill="#404040"/><rect x="1" y="11" width="11" height="1" fill="#D4D0C8"/><rect x="11" y="1" width="1" height="11" fill="#D4D0C8"/></svg>
<svg class="a" style="left:17px;top:363px" width="7" height="7" shape-rendering="crispEdges"><path fill="#000" d="M0 2h1v1h-1zM0 3h1v1h-1zM0 4h1v1h-1zM1 3h1v1h-1zM1 4h1v1h-1zM1 5h1v1h-1zM2 4h1v1h-1zM2 5h1v1h-1zM2 6h1v1h-1zM3 3h1v1h-1zM3 4h1v1h-1zM3 5h1v1h-1zM4 2h1v1h-1zM4 3h1v1h-1zM4 4h1v1h-1zM5 1h1v1h-1zM5 2h1v1h-1zM5 3h1v1h-1zM6 0h1v1h-1zM6 1h1v1h-1zM6 2h1v1h-1z"/></svg>
<div class="t" style="left:32.00px;top:360px;transform:scaleX(1.0265);transform-origin:0 0;">Автоматически сохранять треки в .plt</div>
<svg class="a" style="left:14px;top:383px" width="13" height="13" shape-rendering="crispEdges"><rect x="0" y="0" width="13" height="13" fill="#fff"/><rect x="0" y="0" width="12" height="1" fill="#808080"/><rect x="0" y="0" width="1" height="12" fill="#808080"/><rect x="0" y="12" width="13" height="1" fill="#fff"/><rect x="12" y="0" width="1" height="13" fill="#fff"/><rect x="1" y="1" width="10" height="1" fill="#404040"/><rect x="1" y="1" width="1" height="10" fill="#404040"/><rect x="1" y="11" width="11" height="1" fill="#D4D0C8"/><rect x="11" y="1" width="1" height="11" fill="#D4D0C8"/></svg>
<div class="t" style="left:32.00px;top:383px;transform:scaleX(1.0146);transform-origin:0 0;">Автоматически сохранять треки в .nmea</div>
<div class="sep" style="left:8px;top:404px;width:397px"></div>
<svg class="a" style="left:14px;top:414px" width="13" height="13" shape-rendering="crispEdges"><rect x="0" y="0" width="13" height="13" fill="#fff"/><rect x="0" y="0" width="12" height="1" fill="#808080"/><rect x="0" y="0" width="1" height="12" fill="#808080"/><rect x="0" y="12" width="13" height="1" fill="#fff"/><rect x="12" y="0" width="1" height="13" fill="#fff"/><rect x="1" y="1" width="10" height="1" fill="#404040"/><rect x="1" y="1" width="1" height="10" fill="#404040"/><rect x="1" y="11" width="11" height="1" fill="#D4D0C8"/><rect x="11" y="1" width="1" height="11" fill="#D4D0C8"/></svg>
<svg class="a" style="left:17px;top:417px" width="7" height="7" shape-rendering="crispEdges"><path fill="#000" d="M0 2h1v1h-1zM0 3h1v1h-1zM0 4h1v1h-1zM1 3h1v1h-1zM1 4h1v1h-1zM1 5h1v1h-1zM2 4h1v1h-1zM2 5h1v1h-1zM2 6h1v1h-1zM3 3h1v1h-1zM3 4h1v1h-1zM3 5h1v1h-1zM4 2h1v1h-1zM4 3h1v1h-1zM4 4h1v1h-1zM5 1h1v1h-1zM5 2h1v1h-1zM5 3h1v1h-1zM6 0h1v1h-1zM6 1h1v1h-1zM6 2h1v1h-1z"/></svg>
<div class="t" style="left:32.00px;top:414px;transform:scaleX(1.0364);transform-origin:0 0;">Автоматически показывать/скрывать панель датчиков</div>
<svg class="a" style="left:408px;top:52px" width="250" height="382" shape-rendering="crispEdges"><rect x="0" y="0" width="249" height="1" fill="#808080"/><rect x="0" y="0" width="1" height="381" fill="#808080"/><rect x="0" y="381" width="250" height="1" fill="#fff"/><rect x="249" y="0" width="1" height="382" fill="#fff"/><rect x="1" y="1" width="247" height="1" fill="#fff"/><rect x="1" y="1" width="1" height="379" fill="#fff"/><rect x="1" y="380" width="248" height="1" fill="#808080"/><rect x="248" y="1" width="1" height="380" fill="#808080"/></svg>
<div class="a" style="left:416px;top:50px;width:49px;height:6px;background:#D4D0C8"></div>
<div class="t" style="left:416.00px;top:48px;transform:scaleX(1.0435);transform-origin:0 0;">Спутники</div>
<svg class="a" style="left:413px;top:65px" width="240" height="302">
<rect x="0" y="0" width="240" height="302" fill="#fff"/>
<circle cx="120.5" cy="120.5" r="22" fill="none" stroke="#000" stroke-width="1"/><circle cx="120.5" cy="120.5" r="44" fill="none" stroke="#000" stroke-width="1"/><circle cx="120.5" cy="120.5" r="66" fill="none" stroke="#000" stroke-width="1"/><circle cx="120.5" cy="120.5" r="88" fill="none" stroke="#000" stroke-width="1"/><circle cx="120.5" cy="120.5" r="110" fill="none" stroke="#000" stroke-width="1"/><line x1="10.50" y1="120.50" x2="230.50" y2="120.50" stroke="#000" stroke-width="1"/><line x1="18.87" y1="78.40" x2="222.13" y2="162.60" stroke="#000" stroke-width="1"/><line x1="42.72" y1="42.72" x2="198.28" y2="198.28" stroke="#000" stroke-width="1"/><line x1="78.40" y1="18.87" x2="162.60" y2="222.13" stroke="#000" stroke-width="1"/><line x1="120.50" y1="10.50" x2="120.50" y2="230.50" stroke="#000" stroke-width="1"/><line x1="162.60" y1="18.87" x2="78.40" y2="222.13" stroke="#000" stroke-width="1"/><line x1="198.28" y1="42.72" x2="42.72" y2="198.28" stroke="#000" stroke-width="1"/><line x1="222.13" y1="78.40" x2="18.87" y2="162.60" stroke="#000" stroke-width="1"/>
<circle cx="120.0" cy="9.5" r="8" fill="#f00" stroke="#000" stroke-width="1"/>
<text x="120.0" y="13.5" font-family="Liberation Sans" font-size="11" text-anchor="middle" fill="#000">27</text>
<circle cx="64.0" cy="45.5" r="8" fill="#f00" stroke="#000" stroke-width="1"/>
<text x="64.0" y="49.5" font-family="Liberation Sans" font-size="11" text-anchor="middle" fill="#000">14</text>
<circle cx="175.0" cy="75.5" r="8" fill="#f00" stroke="#000" stroke-width="1"/>
<text x="175.0" y="79.5" font-family="Liberation Sans" font-size="11" text-anchor="middle" fill="#000">17</text>
<circle cx="30.0" cy="99.5" r="8" fill="#f00" stroke="#000" stroke-width="1"/>
<text x="30.0" y="103.5" font-family="Liberation Sans" font-size="11" text-anchor="middle" fill="#000">25</text>
<circle cx="70.0" cy="100" r="8" fill="#f00" stroke="#000" stroke-width="1"/>
<text x="70.0" y="104" font-family="Liberation Sans" font-size="11" text-anchor="middle" fill="#000">12</text>
<circle cx="226.0" cy="120.5" r="8" fill="#f00" stroke="#000" stroke-width="1"/>
<text x="226.0" y="124.5" font-family="Liberation Sans" font-size="11" text-anchor="middle" fill="#000">28</text>
<circle cx="106.0" cy="127.5" r="8" fill="#008000" stroke="#000" stroke-width="1"/>
<text x="106.0" y="131.5" font-family="Liberation Sans" font-size="11" text-anchor="middle" fill="#000">9</text>
<circle cx="178.0" cy="138.5" r="8" fill="#ff0" stroke="#000" stroke-width="1"/>
<text x="178.0" y="142.5" font-family="Liberation Sans" font-size="11" text-anchor="middle" fill="#000">4</text>
<circle cx="153.0" cy="190.5" r="8" fill="#008000" stroke="#000" stroke-width="1"/>
<text x="153.0" y="194.5" font-family="Liberation Sans" font-size="11" text-anchor="middle" fill="#000">2</text>
<circle cx="71.0" cy="201" r="8" fill="#ff0" stroke="#000" stroke-width="1"/>
<text x="71.0" y="205" font-family="Liberation Sans" font-size="11" text-anchor="middle" fill="#000">15</text>
<rect x="10.5" y="240.5" width="9" height="51" fill="none" stroke="#00f" stroke-width="1"/>
<rect x="11" y="258" width="8" height="33" fill="#008000"/>
<text x="15" y="302" font-family="Liberation Sans" font-size="11" text-anchor="middle" fill="#000">2</text>
<rect x="29.5" y="240.5" width="9" height="51" fill="none" stroke="#00f" stroke-width="1"/>
<rect x="30" y="271" width="8" height="20" fill="#0000ff"/>
<text x="34" y="302" font-family="Liberation Sans" font-size="11" text-anchor="middle" fill="#000">15</text>
<rect x="48.5" y="240.5" width="9" height="51" fill="none" stroke="#00f" stroke-width="1"/>
<rect x="49" y="270" width="8" height="21" fill="#008000"/>
<text x="53" y="302" font-family="Liberation Sans" font-size="11" text-anchor="middle" fill="#000">9</text>
<rect x="67.5" y="240.5" width="9" height="51" fill="none" stroke="#00f" stroke-width="1"/>
<rect x="68" y="273" width="8" height="18" fill="#0000ff"/>
<text x="72" y="302" font-family="Liberation Sans" font-size="11" text-anchor="middle" fill="#000">4</text>
<rect x="86.5" y="240.5" width="9" height="51" fill="none" stroke="#00f" stroke-width="1"/>
<text x="91" y="302" font-family="Liberation Sans" font-size="11" text-anchor="middle" fill="#000">12</text>
<rect x="105.5" y="240.5" width="9" height="51" fill="none" stroke="#00f" stroke-width="1"/>
<text x="110" y="302" font-family="Liberation Sans" font-size="11" text-anchor="middle" fill="#000">14</text>
<rect x="124.5" y="240.5" width="9" height="51" fill="none" stroke="#00f" stroke-width="1"/>
<text x="129" y="302" font-family="Liberation Sans" font-size="11" text-anchor="middle" fill="#000">17</text>
<rect x="143.5" y="240.5" width="9" height="51" fill="none" stroke="#00f" stroke-width="1"/>
<text x="148" y="302" font-family="Liberation Sans" font-size="11" text-anchor="middle" fill="#000">25</text>
<rect x="162.5" y="240.5" width="9" height="51" fill="none" stroke="#00f" stroke-width="1"/>
<text x="167" y="302" font-family="Liberation Sans" font-size="11" text-anchor="middle" fill="#000">28</text>
<rect x="181.5" y="240.5" width="9" height="51" fill="none" stroke="#00f" stroke-width="1"/>
<text x="186" y="302" font-family="Liberation Sans" font-size="11" text-anchor="middle" fill="#000">27</text>
<rect x="200.5" y="240.5" width="9" height="51" fill="none" stroke="#00f" stroke-width="1"/>
<rect x="219.5" y="240.5" width="9" height="51" fill="none" stroke="#00f" stroke-width="1"/>
</svg>
<div class="sep" style="left:410px;top:370px;width:246px"></div>
<div class="a" style="left:416px;top:376px;width:12px;height:12px;background:#008000;border:1px solid #000"></div>
<div class="a" style="left:416px;top:396px;width:12px;height:12px;background:#ff0;border:1px solid #000"></div>
<div class="a" style="left:416px;top:416px;width:12px;height:12px;background:#f00;border:1px solid #000"></div>
<div class="t" style="left:441.00px;top:376px;transform:scaleX(1.0417);transform-origin:0 0;height:10px;overflow:hidden;">Активные спутники</div>
<div class="t" style="left:440.02px;top:396px;transform:scaleX(0.9778);transform-origin:0 0;">Видимые</div>
<div class="t" style="left:440.03px;top:416px;transform:scaleX(0.9673);transform-origin:0 0;height:10px;overflow:hidden;">Видимые с нулевым сигналом</div>
<svg class="a" style="left:422px;top:441px" width="75" height="25" shape-rendering="crispEdges"><rect x="0" y="0" width="75" height="25" fill="#D4D0C8"/><rect x="0" y="0" width="74" height="1" fill="#fff"/><rect x="0" y="0" width="1" height="24" fill="#fff"/><rect x="0" y="24" width="75" height="1" fill="#404040"/><rect x="74" y="0" width="1" height="25" fill="#404040"/><rect x="1" y="1" width="72" height="1" fill="#D4D0C8"/><rect x="1" y="1" width="1" height="22" fill="#D4D0C8"/><rect x="1" y="23" width="73" height="1" fill="#808080"/><rect x="73" y="1" width="1" height="23" fill="#808080"/></svg>
<div class="a" style="left:503px;top:441px;width:75px;height:25px;border:1px solid #000;background:#D4D0C8"></div>
<svg class="a" style="left:504px;top:442px" width="73" height="23" shape-rendering="crispEdges"><rect x="0" y="0" width="73" height="23" fill="#D4D0C8"/><rect x="0" y="0" width="72" height="1" fill="#fff"/><rect x="0" y="0" width="1" height="22" fill="#fff"/><rect x="0" y="22" width="73" height="1" fill="#404040"/><rect x="72" y="0" width="1" height="23" fill="#404040"/><rect x="1" y="1" width="70" height="1" fill="#D4D0C8"/><rect x="1" y="1" width="1" height="20" fill="#D4D0C8"/><rect x="1" y="21" width="71" height="1" fill="#808080"/><rect x="71" y="1" width="1" height="21" fill="#808080"/></svg>
<svg class="a" style="left:584px;top:441px" width="75" height="25" shape-rendering="crispEdges"><rect x="0" y="0" width="75" height="25" fill="#D4D0C8"/><rect x="0" y="0" width="74" height="1" fill="#fff"/><rect x="0" y="0" width="1" height="24" fill="#fff"/><rect x="0" y="24" width="75" height="1" fill="#404040"/><rect x="74" y="0" width="1" height="25" fill="#404040"/><rect x="1" y="1" width="72" height="1" fill="#D4D0C8"/><rect x="1" y="1" width="1" height="22" fill="#D4D0C8"/><rect x="1" y="23" width="73" height="1" fill="#808080"/><rect x="73" y="1" width="1" height="23" fill="#808080"/></svg>
<div class="t" style="left:431.02px;top:447px;transform:scaleX(0.9815);transform-origin:0 0;">Применить</div>
<div class="t" style="left:533.00px;top:447px;transform:scaleX(0.9333);transform-origin:0 0;">OK</div>
<div class="t" style="left:596.00px;top:447px;transform:scaleX(1.0000);transform-origin:0 0;">Отменить</div>
</body></html>
